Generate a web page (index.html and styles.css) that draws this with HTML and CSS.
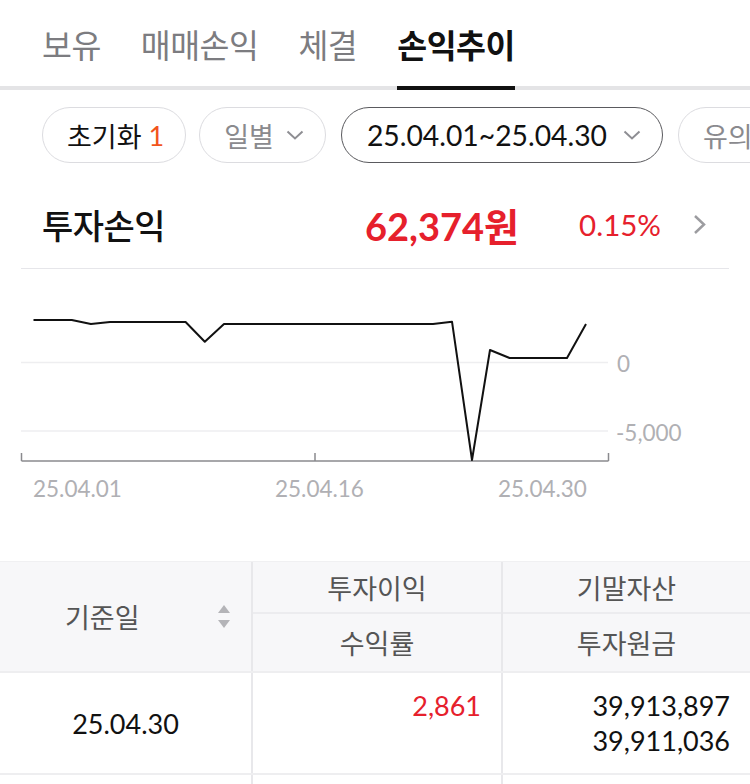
FILE: index.html
```html
<!DOCTYPE html>
<html lang="ko">
<head>
    <meta charset="UTF-8">
    <title>손익추이</title>
    <link rel="stylesheet" href="styles.css">
</head>
<body>
<div class="tabs">
    <div class="tab">보유</div>
    <div class="tab">매매손익</div>
    <div class="tab">체결</div>
    <div class="tab on">손익추이</div>
</div>

<div class="filters">
    <div class="chip reset">초기화 <b>1</b></div>
    <div class="chip grey">일별
        <svg class="arr" width="18" height="10" viewBox="0 0 18 10"><path d="M1.5 1.5 L9 8.5 L16.5 1.5" fill="none" stroke="#8e8e93" stroke-width="2"/></svg>
    </div>
    <div class="chip dark">25.04.01~25.04.30
        <svg class="arr" width="18" height="10" viewBox="0 0 18 10"><path d="M1.5 1.5 L9 8.5 L16.5 1.5" fill="none" stroke="#8e8e93" stroke-width="2"/></svg>
    </div>
    <div class="chip grey">유의사항</div>
</div>

<div class="summary">
    <span class="sum-title">투자손익</span>
    <span class="sum-amt">62,374원</span>
    <span class="sum-pct">0.15%</span>
    <svg class="more" width="13" height="21" viewBox="0 0 13 21"><path d="M2 2 L11 10.5 L2 19" fill="none" stroke="#9c9ca0" stroke-width="2.5"/></svg>
</div>

<div class="chart">
    <svg width="750" height="240" viewBox="0 0 750 240">
        <line x1="21" y1="93.5" x2="608" y2="93.5" stroke="#eeeef0" stroke-width="1.5"/>
        <line x1="21" y1="162" x2="608" y2="162" stroke="#eeeef0" stroke-width="1.5"/>
        <text x="617" y="103" class="ylab">0</text>
        <text x="616" y="172" class="ylab">-5,000</text>
        <path d="M21.5 192 H608.5 M21.5 184 V192 M315 184 V192 M608.5 184 V192" fill="none" stroke="#8a8a8e" stroke-width="1.5"/>
        <polyline fill="none" stroke="#111" stroke-width="2" stroke-linejoin="round"
            points="33.5,51 71.8,51 90.9,55 110,53 185.6,53 204.8,72.7 224,55 433,55 452,52.7 472,191 490,81 509.6,89 567,89 586,55"/>
        <text x="33" y="228" class="xlab">25.04.01</text>
        <text x="275" y="228" class="xlab">25.04.16</text>
        <text x="498" y="228" class="xlab">25.04.30</text>
    </svg>
</div>

<div class="table">
    <div class="thead">
        <div class="th th-date">
            <span>기준일</span>
            <svg width="14" height="24" viewBox="0 0 14 24"><path d="M7 0 L13 8 H1 Z M1 15 H13 L7 23 Z" fill="#b4b4b8"/></svg>
        </div>
        <div class="th-col">
            <div class="th">투자이익</div>
            <div class="th">수익률</div>
        </div>
        <div class="th-col">
            <div class="th">기말자산</div>
            <div class="th">투자원금</div>
        </div>
    </div>
    <div class="tr">
        <div class="td td-date">25.04.30</div>
        <div class="td num"><span class="red">2,861</span></div>
        <div class="td num"><span>39,913,897</span><span>39,911,036</span></div>
    </div>
    <div class="tr tr-next">
        <div class="td"></div>
        <div class="td"></div>
        <div class="td"></div>
    </div>
</div>
</body>
</html>
```

FILE: styles.css
```css
*{margin:0;padding:0;box-sizing:border-box;}
body{width:750px;height:784px;overflow:hidden;background:#fff;color:#111;font-family:Lato,"Noto Sans CJK KR",sans-serif;}

.tabs{display:flex;gap:40px;padding-left:42px;height:90px;border-bottom:4px solid #e4e4e6;}
.tab{font-size:32.5px;line-height:44px;padding-top:24px;color:#7c7c80;letter-spacing:-0.5px;border-bottom:4px solid transparent;margin-bottom:-4px;}
.tab.on{color:#111;font-weight:700;border-bottom-color:#111;}

.filters{display:flex;gap:13px;padding-left:42px;margin-top:17px;white-space:nowrap;}
.chip{flex-shrink:0;display:flex;align-items:center;height:56px;padding:0 21px 0 24px;border:1.5px solid #dcdce0;border-radius:28px;font-size:27px;color:#111;}
.chip b{font-weight:400;color:#f2541b;margin-left:7px;}
.chip.grey{color:#8a8a8e;}
.chip.dark{border-color:#5a5a5e;font-size:28.3px;padding:0 21px 0 25px;margin:0 2px;}
.chip .arr{margin-left:12px;}
.chip.dark .arr{margin-left:16px;}

.summary{display:flex;align-items:center;height:88px;margin:18px 21px 0;padding:0 23px 0 21px;border-bottom:1.5px solid #e6e6ea;}
.sum-title{font-size:34px;font-weight:500;letter-spacing:-0.5px;}
.sum-amt{margin-left:auto;font-size:38px;font-weight:700;color:#e6202c;}
.sum-pct{margin-left:60px;font-size:29.5px;color:#e6202c;}
.more{margin-left:32px;}

.chart{height:292px;}
.chart svg{display:block;}
.ylab,.xlab{font-family:Lato,sans-serif;font-size:22.5px;fill:#b0b0b4;}

.table{border-top:1px solid #f0f0f2;}
.thead{display:grid;grid-template-columns:251px 250px 249px;height:109px;background:#f7f7f9;}
.th-col{display:grid;grid-template-rows:52px 57px;border-left:2px solid #e8e8eb;}
.th-col .th:first-child{border-bottom:2px solid #ececef;}
.th{display:flex;align-items:center;justify-content:center;font-size:27px;color:#555;}
.th-date{justify-content:space-between;padding:0 20px 0 65px;}
.tr{display:grid;grid-template-columns:251px 250px 249px;height:102px;border-top:2px solid #eeeef0;}
.tr-next{height:40px;}
.td{font-size:27px;}
.td + .td{border-left:2px solid #e8e8eb;}
.td-date{display:flex;align-items:center;justify-content:center;}
.num{display:flex;flex-direction:column;align-items:flex-end;padding:15px 20px 0 0;line-height:35px;}
.red{color:#e6202c;}
```
